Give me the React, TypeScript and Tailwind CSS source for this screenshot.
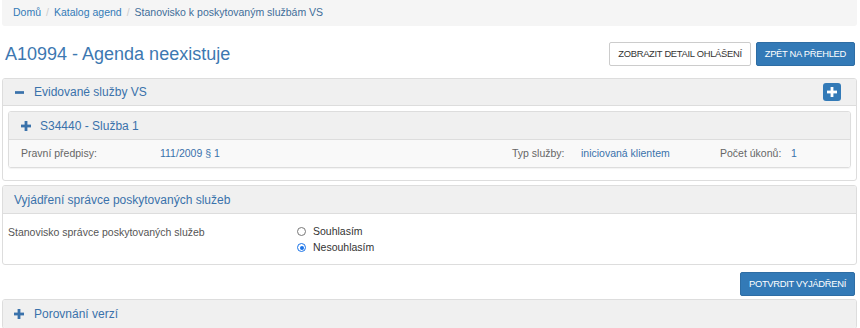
import React from 'react';

const font = { fontFamily: '"Liberation Sans", Arial, sans-serif' };

function PlusIcon({ className = '' }: { className?: string }) {
  return (
    <svg viewBox="0 0 10 10" className={className} fill="#3a72ab">
      <rect x="3.6" y="0" width="2.8" height="10" />
      <rect x="0" y="3.6" width="10" height="2.8" />
    </svg>
  );
}

function MinusIcon({ className = '' }: { className?: string }) {
  return (
    <svg viewBox="0 0 10 3" className={className} fill="#3a72ab">
      <rect x="0" y="0" width="10" height="3" />
    </svg>
  );
}

function Radio({ checked, label }: { checked?: boolean; label: string }) {
  return (
    <label className="flex items-center gap-[7px] h-[16px]">
      {checked ? (
        <span className="w-[9px] h-[9px] rounded-full bg-white border-[1.5px] border-[#1a73e8] flex items-center justify-center">
          <span className="w-[4px] h-[4px] rounded-full bg-[#1a73e8]" />
        </span>
      ) : (
        <span className="w-[9px] h-[9px] rounded-full border border-[#777] bg-white" />
      )}
      <span className="text-[10.5px] text-[#333]">{label}</span>
    </label>
  );
}

export default function App() {
  return (
    <div className="w-[860px] h-[328px] overflow-hidden bg-white pl-[2px] pr-[3px]" style={font}>
      {/* breadcrumb */}
      <nav className="h-[26px] bg-[#f5f5f5] rounded-b-[3px] flex items-center pl-[11px] text-[10.5px]">
        <a className="text-[#337ab7]">Domů</a>
        <span className="text-[#ccc] px-[5px]">/</span>
        <a className="text-[#337ab7]">Katalog agend</a>
        <span className="text-[#ccc] px-[5px]">/</span>
        <span className="text-[#3f6d99]">Stanovisko k poskytovaným službám VS</span>
      </nav>

      {/* title row */}
      <div className="flex items-center justify-between h-[52px] pt-[4px]">
        <h1 className="text-[18px] text-[#3d78b1] pl-[3px]">A10994 - Agenda neexistuje</h1>
        <div className="flex gap-[5px] pr-[2px]">
          <button className="h-[24px] px-[8px] border border-[#ccc] rounded-[2px] bg-white text-[9.4px] text-[#333] tracking-[-0.3px]">
            ZOBRAZIT DETAIL OHLÁŠENÍ
          </button>
          <button className="h-[24px] px-[8px] border border-[#2e6da4] rounded-[2px] bg-[#337ab7] text-[9.4px] text-white tracking-[-0.3px]">
            ZPĚT NA PŘEHLED
          </button>
        </div>
      </div>

      {/* Evidované služby VS */}
      <section className="border border-[#ddd] rounded-[3px] overflow-hidden">
        <header className="h-[27px] bg-[#f0f0f0] border-b border-[#ddd] flex items-center pl-[12px] pr-[15px]">
          <MinusIcon className="w-[9px] h-[3px]" />
          <span className="ml-[10px] text-[12px] text-[#3a72ab]">Evidované služby VS</span>
          <button className="ml-auto w-[18px] h-[18px] rounded-[3px] bg-[#337ab7] flex items-center justify-center">
            <svg viewBox="0 0 10 10" className="w-[10px] h-[10px]" fill="white">
              <rect x="3.6" y="0" width="2.8" height="10" />
              <rect x="0" y="3.6" width="10" height="2.8" />
            </svg>
          </button>
        </header>
        <div className="px-[5px] pt-[5px] pb-[12px]">
          <div className="border border-[#ddd] rounded-[3px] overflow-hidden shadow-[0_1px_1px_rgba(0,0,0,0.05)]">
            <div className="h-[28px] bg-[#f0f0f0] border-b border-[#ddd] flex items-center pl-[12px]">
              <PlusIcon className="w-[10px] h-[10px]" />
              <span className="ml-[9px] text-[12px] text-[#3a72ab]">S34440 - Služba 1</span>
            </div>
            <div className="h-[27px] bg-[#f9f9f9] flex items-center text-[10.5px] pl-[12px]">
              <span className="w-[139px] text-[#666]">Pravní předpisy:</span>
              <span className="w-[352px] text-[#3a72ab]">111/2009 § 1</span>
              <span className="w-[69px] text-[#666]">Typ služby:</span>
              <span className="w-[139px] text-[#3a72ab]">iniciovaná klientem</span>
              <span className="w-[71px] text-[#666]">Počet úkonů:</span>
              <span className="text-[#3a72ab]">1</span>
            </div>
          </div>
        </div>
      </section>

      {/* Vyjádření správce */}
      <section className="mt-[4px] border border-[#ddd] rounded-[3px] overflow-hidden">
        <header className="h-[28px] bg-[#f0f0f0] border-b border-[#ddd] flex items-center pl-[11px]">
          <span className="text-[12px] text-[#3a72ab]">Vyjádření správce poskytovaných služeb</span>
        </header>
        <div className="flex pt-[10px] pb-[9px] pl-[5px] h-[50px]">
          <span className="w-[289px] text-[10.5px] text-[#555] leading-[16px]">Stanovisko správce poskytovaných služeb</span>
          <div className="flex flex-col">
            <Radio label="Souhlasím" />
            <Radio checked label="Nesouhlasím" />
          </div>
        </div>
      </section>

      <div className="flex justify-end pt-[7px] pb-[3px] pr-[2px]">
        <button className="h-[24px] px-[8px] border border-[#2e6da4] rounded-[2px] bg-[#337ab7] text-[9.4px] text-white tracking-[-0.3px]">
          POTVRDIT VYJÁDŘENÍ
        </button>
      </div>

      {/* Porovnání verzí */}
      <section className="border border-[#ddd] rounded-[3px] overflow-hidden">
        <header className="h-[28px] bg-[#f0f0f0] flex items-center pl-[11px]">
          <PlusIcon className="w-[10px] h-[10px]" />
          <span className="ml-[10px] text-[12px] text-[#3a72ab]">Porovnání verzí</span>
        </header>
      </section>
    </div>
  );
}
